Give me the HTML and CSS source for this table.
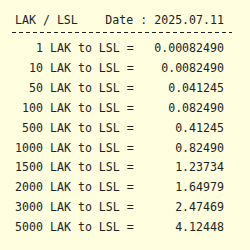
FILE: index.html
```html
<!DOCTYPE html>
<html>
<head>
<meta charset="utf-8">
<link rel="stylesheet" href="styles.css">
</head>
<body>
<div class="box">
  <div class="head"><span>LAK / LSL</span><span>Date : 2025.07.11</span></div>
  <div class="rule"></div>
  <div class="rows">
    <span class="amt">1</span><span class="lbl">LAK to LSL =</span><span class="val">0.00082490</span>
    <span class="amt">10</span><span class="lbl">LAK to LSL =</span><span class="val">0.0082490</span>
    <span class="amt">50</span><span class="lbl">LAK to LSL =</span><span class="val">0.041245</span>
    <span class="amt">100</span><span class="lbl">LAK to LSL =</span><span class="val">0.082490</span>
    <span class="amt">500</span><span class="lbl">LAK to LSL =</span><span class="val">0.41245</span>
    <span class="amt">1000</span><span class="lbl">LAK to LSL =</span><span class="val">0.82490</span>
    <span class="amt">1500</span><span class="lbl">LAK to LSL =</span><span class="val">1.23734</span>
    <span class="amt">2000</span><span class="lbl">LAK to LSL =</span><span class="val">1.64979</span>
    <span class="amt">3000</span><span class="lbl">LAK to LSL =</span><span class="val">2.47469</span>
    <span class="amt">5000</span><span class="lbl">LAK to LSL =</span><span class="val">4.12448</span>
  </div>
</div>
</body>
</html>
```

FILE: styles.css
```css
html, body {
  margin: 0;
  padding: 0;
  background: #ffffe0;
}
body {
  font-family: "DejaVu Sans Mono", monospace;
  font-size: 11.6px;
  color: #222;
}
.box {
  padding: 13px 0 0 15px;
  width: 209px;
}
.head {
  display: flex;
  justify-content: space-between;
  line-height: 14px;
}
.rule {
  margin: 5px 0 4px -3px;
  width: 220px;
  height: 1px;
  background: repeating-linear-gradient(to right, #222 0 4px, transparent 4px 7px);
}
.rows {
  display: grid;
  grid-template-columns: 28px auto 1fr;
  column-gap: 7px;
  margin-top: 6px;
  line-height: 19.9px;
}
.amt { text-align: right; }
.val { text-align: right; }
```
